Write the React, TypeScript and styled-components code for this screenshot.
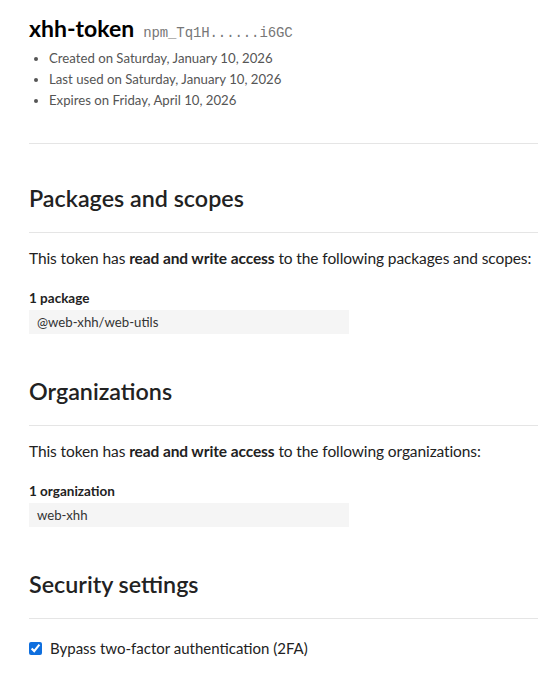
import React from 'react';
import styled, { createGlobalStyle } from 'styled-components';

const GlobalStyle = createGlobalStyle`
  html, body {
    margin: 0;
    padding: 0;
    background: #fff;
  }
  body {
    font-family: Lato, "Open Sans", sans-serif;
    color: #222;
    overflow: hidden;
  }
`;

const Page = styled.main`
  padding: 14px 0 0 29px;
`;

const TitleRow = styled.div`
  display: flex;
  align-items: baseline;
  gap: 9px;
`;

const TokenName = styled.h1`
  margin: 0;
  font-size: 23px;
  font-weight: 700;
  color: #000;
`;

const TokenValue = styled.code`
  font-family: "Liberation Mono", monospace;
  font-size: 14px;
  letter-spacing: -0.1px;
  color: #777;
`;

const Meta = styled.ul`
  margin: 6px 0 0;
  padding-left: 20px;
  font-size: 13.2px;
  color: #555;
  line-height: 21px;
  li::marker {
    color: #555;
  }
`;

const Divider = styled.hr`
  border: 0;
  border-top: 1px solid #e5e5e5;
  margin: 0;
`;

const Section = styled.section<{ $top: number }>`
  margin-top: ${(p) => p.$top}px;
`;

const SectionTitle = styled.h2`
  margin: 0 0 19px;
  font-size: 23.3px;
  font-weight: 600;
  line-height: 30px;
  color: #222;
`;

const Lead = styled.p`
  margin: 13px 0 0;
  font-size: 15.5px;
  letter-spacing: -0.1px;
  line-height: 24px;
  color: #222;
  white-space: nowrap;
  b {
    font-weight: 700;
  }
`;

const CountLabel = styled.div`
  margin-top: 19px;
  font-size: 13.5px;
  font-weight: 700;
  color: #222;
  line-height: 18px;
`;

const Chip = styled.div`
  width: 320px;
  box-sizing: border-box;
  margin-top: 3px;
  padding: 0 8px;
  height: 24px;
  line-height: 24px;
  background: #f5f5f5;
  font-size: 13.2px;
  color: #333;
`;

const CheckRow = styled.label`
  display: flex;
  align-items: center;
  gap: 8px;
  margin-top: 20px;
  font-size: 15px;
  color: #222;
  input {
    margin: 0;
    width: 13px;
    height: 13px;
    accent-color: #0f6fde;
  }
`;

export default function App() {
  return (
    <>
      <GlobalStyle />
      <Page>
        <TitleRow>
          <TokenName>xhh-token</TokenName>
          <TokenValue>npm_Tq1H......i6GC</TokenValue>
        </TitleRow>
        <Meta>
          <li>Created on Saturday, January 10, 2026</li>
          <li>Last used on Saturday, January 10, 2026</li>
          <li>Expires on Friday, April 10, 2026</li>
        </Meta>
        <Section $top={32}>
          <Divider />
        </Section>

        <Section $top={39}>
          <SectionTitle>Packages and scopes</SectionTitle>
          <Divider />
          <Lead>
            This token has <b>read and write access</b> to the following packages and scopes:
          </Lead>
          <CountLabel>1 package</CountLabel>
          <Chip>@web-xhh/web-utils</Chip>
        </Section>

        <Section $top={42}>
          <SectionTitle>Organizations</SectionTitle>
          <Divider />
          <Lead>
            This token has <b>read and write access</b> to the following organizations:
          </Lead>
          <CountLabel>1 organization</CountLabel>
          <Chip>web-xhh</Chip>
        </Section>

        <Section $top={42}>
          <SectionTitle>Security settings</SectionTitle>
          <Divider />
          <CheckRow>
            <input type="checkbox" defaultChecked />
            Bypass two-factor authentication (2FA)
          </CheckRow>
        </Section>
      </Page>
    </>
  );
}
